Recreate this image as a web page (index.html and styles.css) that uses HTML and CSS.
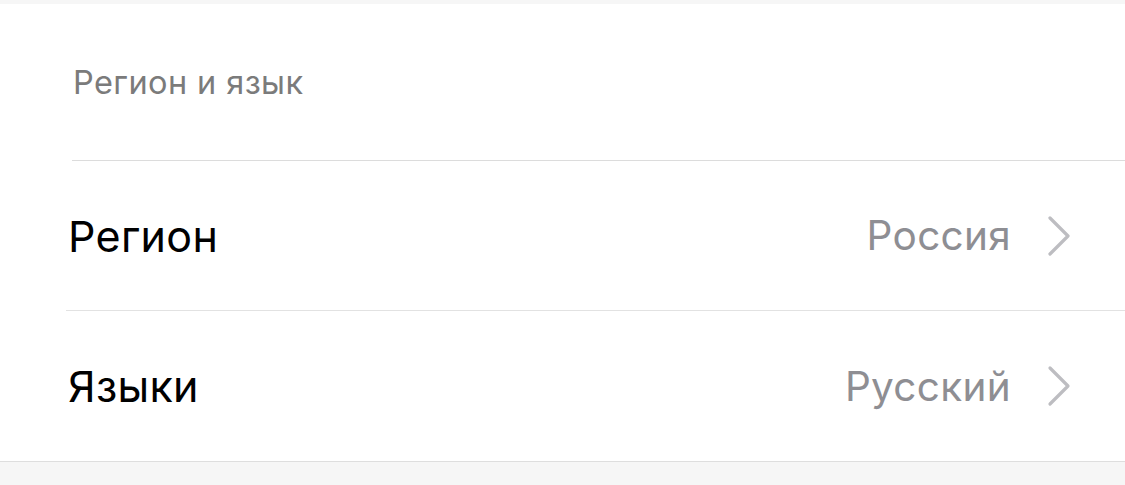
FILE: index.html
```html
<!DOCTYPE html>
<html lang="ru">
<head>
<meta charset="utf-8">
<link rel="stylesheet" href="styles.css">
</head>
<body>
<div class="topstrip"></div>
<section class="group">
  <div class="group-header"><span class="group-title">Регион и язык</span></div>
  <div class="row">
    <span class="row-label">Регион</span>
    <span class="row-value">Россия</span>
    <svg class="chevron" width="28" height="44" viewBox="0 0 28 44"><polyline points="5,4 23,22 5,40" fill="none" stroke="#bdbdc1" stroke-width="3.2" stroke-linecap="round" stroke-linejoin="round"/></svg>
  </div>
  <div class="row last">
    <span class="row-label">Языки</span>
    <span class="row-value">Русский</span>
    <svg class="chevron" width="28" height="44" viewBox="0 0 28 44"><polyline points="5,4 23,22 5,40" fill="none" stroke="#bdbdc1" stroke-width="3.2" stroke-linecap="round" stroke-linejoin="round"/></svg>
  </div>
</section>
</body>
</html>
```
FILE: styles.css
```css
html, body {
  margin: 0;
  padding: 0;
  background: #f6f6f6;
  font-family: Inter, "Liberation Sans", sans-serif;
}
.topstrip {
  height: 4px;
  background: #f6f6f6;
}
.group {
  background: #ffffff;
  border-bottom: 1px solid #dedede;
}
.group-header {
  margin-left: 72px;
  height: 156px;
  border-bottom: 1px solid #dcdcdc;
  display: flex;
  align-items: center;
}
.group-title {
  font-size: 32.5px;
  color: #7b7b7b;
  padding-left: 1px;
  letter-spacing: 0.4px;
}
.row {
  margin-left: 66px;
  height: 149px;
  border-bottom: 1px solid #e2e2e2;
  display: flex;
  align-items: center;
  padding-right: 52px;
}
.row.last {
  border-bottom: none;
  height: 150px;
}
.row-label {
  flex: 1;
  font-size: 43px;
  color: #000000;
  padding-left: 2px;
  letter-spacing: 0.3px;
}
.row-value {
  font-size: 40.5px;
  color: #8e8e93;
  margin-right: 34px;
  letter-spacing: 0.3px;
}
.chevron {
  display: block;
}
```
